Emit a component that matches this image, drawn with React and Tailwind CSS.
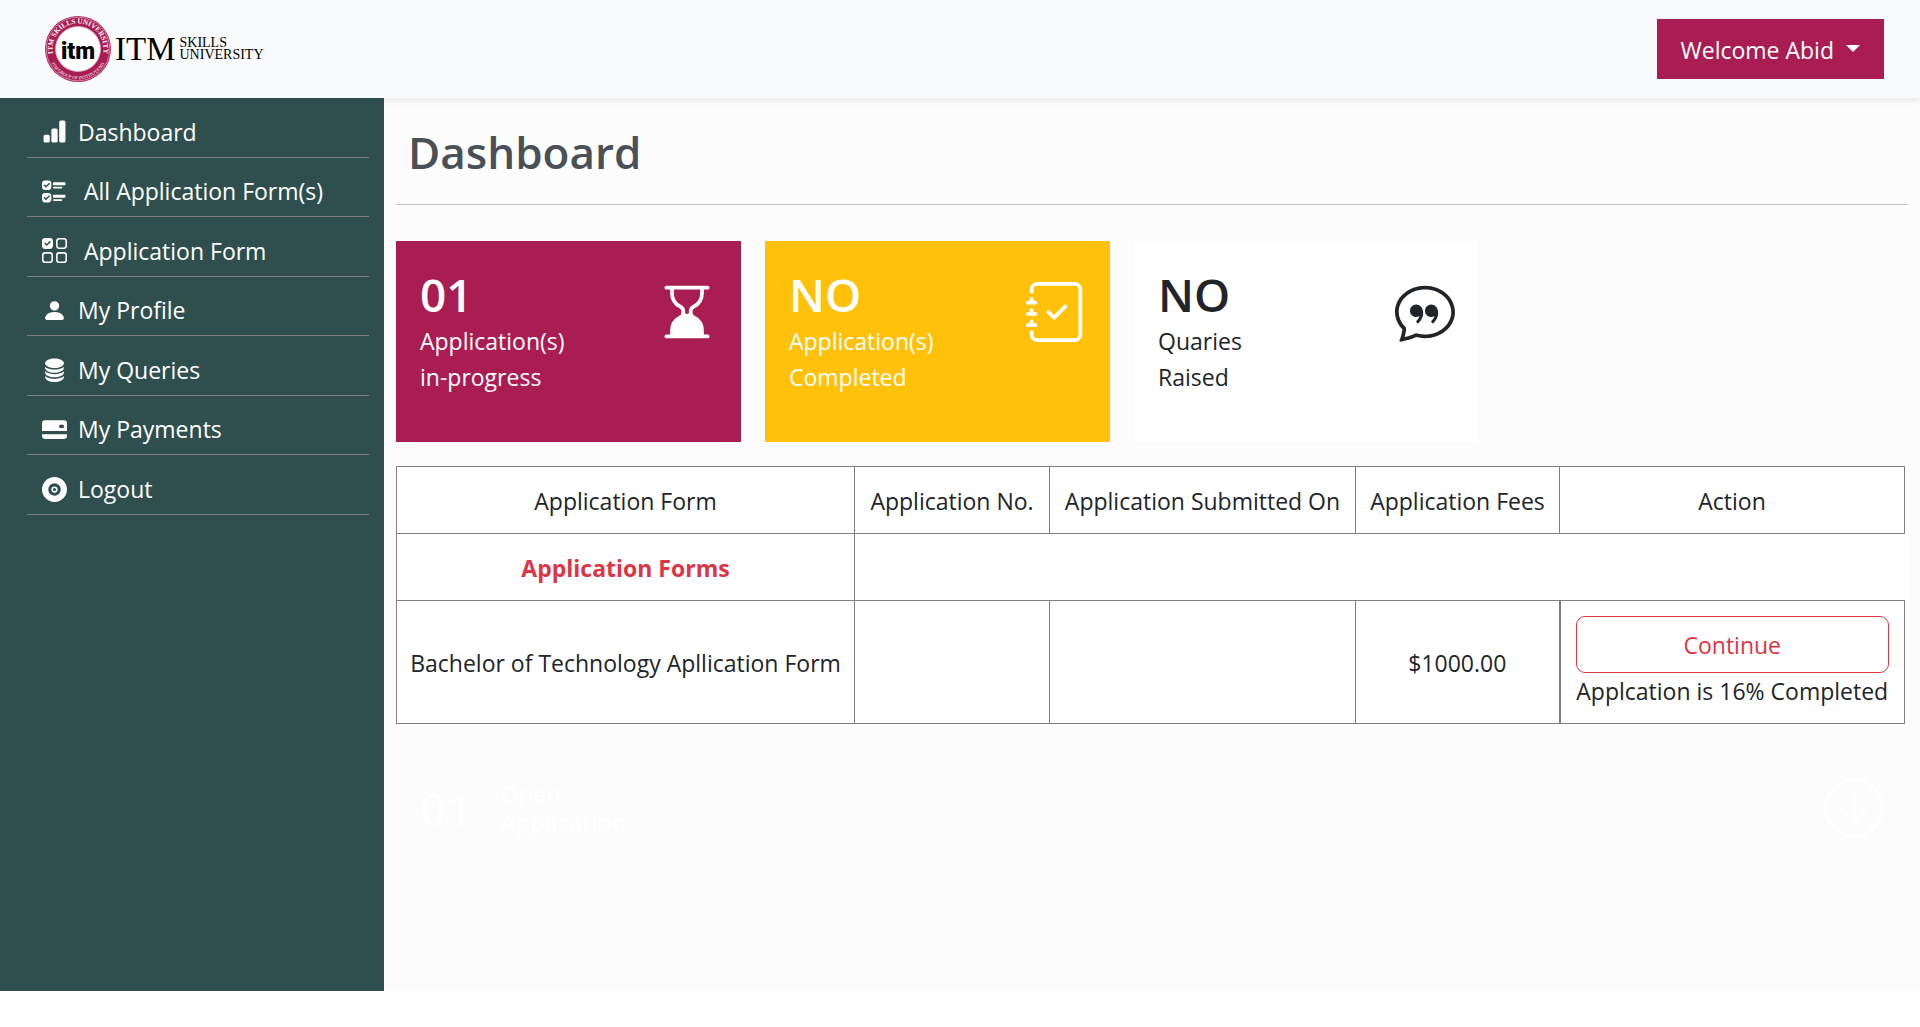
import {
  BsBarChartFill, BsUiChecks, BsUiChecksGrid, BsPersonFill, BsDatabaseFill,
  BsCreditCard2BackFill, BsVinylFill, BsHourglassBottom, BsJournalCheck,
  BsChatQuote, BsArrowDownCircle,
} from "react-icons/bs";

const navItems = [
  { label: "Dashboard", Icon: BsBarChartFill, gap: "gap-[11px]" },
  { label: "All Application Form(s)", Icon: BsUiChecks, gap: "gap-[17px]" },
  { label: "Application Form", Icon: BsUiChecksGrid, gap: "gap-[17px]" },
  { label: "My Profile", Icon: BsPersonFill, gap: "gap-[11px]" },
  { label: "My Queries", Icon: BsDatabaseFill, gap: "gap-[11px]" },
  { label: "My Payments", Icon: BsCreditCard2BackFill, gap: "gap-[11px]" },
  { label: "Logout", Icon: BsVinylFill, gap: "gap-[11px]" },
];

const cards = [
  { count: "01", lines: ["Application(s)", "in-progress"], Icon: BsHourglassBottom, tone: "bg-[#a91d52] text-white" },
  { count: "NO", lines: ["Application(s)", "Completed"], Icon: BsJournalCheck, tone: "bg-[#ffc10a] text-white" },
  { count: "NO", lines: ["Quaries", "Raised"], Icon: BsChatQuote, tone: "bg-white text-[#212529]" },
];

function Logo() {
  return (
    <a href="#home" aria-label="ITM Skills University" className="flex items-center gap-1 text-black">
      <svg viewBox="0 0 66 66" className="size-[66px]" aria-hidden="true">
        <defs>
          <path id="seal-top" d="M8.8 41 A25.5 25.5 0 1 1 57.2 41" />
          <path id="seal-bottom" d="M4 42 A30.4 30.4 0 0 0 62 42" />
        </defs>
        <circle cx="33" cy="33" r="33" fill="#a91d52" />
        <circle cx="33" cy="33" r="31.8" fill="none" stroke="#e3a9c0" strokeWidth="0.7" />
        <circle cx="33" cy="33" r="22.5" fill="#fff" stroke="#e3a9c0" strokeWidth="0.8" />
        <text fill="#fff" fontSize="7.2" fontWeight="700" fontFamily="Liberation Serif, serif">
          <textPath href="#seal-top" startOffset="50%" textAnchor="middle">ITM SKILLS UNIVERSITY</textPath>
        </text>
        <text fill="#fff" fontSize="4.6" fontFamily="Liberation Serif, serif">
          <textPath href="#seal-bottom" startOffset="50%" textAnchor="middle">ITM GROUP OF INSTITUTIONS</textPath>
        </text>
        <text x="33" y="43" textAnchor="middle" fontSize="23" fontWeight="900" fontFamily="Roboto, sans-serif">itm</text>
      </svg>
      <span className="font-['Liberation_Serif',serif] text-[33px] leading-none">ITM</span>
      <span className="flex flex-col font-['Liberation_Serif',serif] text-sm leading-3">
        <span>SKILLS</span>
        <span>UNIVERSITY</span>
      </span>
    </a>
  );
}

export default function App() {
  return (
    <div className="min-h-screen bg-white font-['Open_Sans','Noto_Sans',sans-serif] text-[23px] leading-9 text-[#212529]">
      <header className="relative z-10 flex h-[98px] items-center justify-between bg-[#f8fafc] pl-[45px] pr-9 shadow-[0_3px_6px_rgba(0,0,0,0.08)]">
        <Logo />
        <button type="button" className="flex items-center gap-3 bg-[#a91d52] px-6 pt-[13px] pb-[11px] text-white">
          Welcome Abid
          <svg viewBox="0 0 14 7" className="mb-1 h-[7px] w-3.5" fill="currentColor" aria-hidden="true">
            <path d="M0 0h14L7 7z" />
          </svg>
        </button>
      </header>

      <div className="flex min-h-[893px]">
        <nav className="w-1/5 shrink-0 bg-[#2f4f4f] pl-[27px] pr-[15px] text-white">
          <ul className="grid h-[417px] grid-rows-7">
            {navItems.map(({ label, Icon, gap }) => (
              <li key={label} className="flex flex-col justify-end border-b border-[#808080]">
                <a href="#nav" className={`flex items-center pb-[7px] pl-[15px] ${gap}`}>
                  <Icon className="size-[25px]" />
                  {label}
                </a>
              </li>
            ))}
          </ul>
        </nav>

        <main className="min-w-0 grow bg-[#fcfcfc] px-3">
          <h1 className="border-b border-[#c4c6c8] px-3 pt-6 pb-[22px] text-[44px] leading-[60px] font-semibold text-[#495057]">
            Dashboard
          </h1>

          <section className="grid grid-cols-4 gap-6 pt-9 pr-[60px]">
            {cards.map(({ count, lines, Icon, tone }) => (
              <article key={lines.join()} className={`flex justify-between px-6 pt-6 pb-[47px] ${tone}`}>
                <div>
                  <p className="text-[46px] leading-[58px] font-semibold">{count}</p>
                  {lines.map((line) => <p key={line}>{line}</p>)}
                </div>
                <Icon className="mt-[17px] size-[60px]" />
              </article>
            ))}
          </section>

          <div className="mt-6 mr-[-3px] bg-white pr-1.5">
            <table className="w-full border-collapse text-center whitespace-nowrap">
              <thead>
                <tr className="h-[67px] [&>th]:border [&>th]:border-[#808080] [&>th]:pt-0.5 [&>th]:font-normal">
                  <th scope="col" className="w-[458px]">Application Form</th>
                  <th scope="col" className="w-[195px]">Application No.</th>
                  <th scope="col" className="w-[306px]">Application Submitted On</th>
                  <th scope="col" className="w-[204px]">Application Fees</th>
                  <th scope="col">Action</th>
                </tr>
              </thead>
              <tbody>
                <tr className="h-[67px]">
                  <th scope="row" className="border border-[#808080] pt-0.5 font-bold text-[#dc3545]">Application Forms</th>
                  <td colSpan={4} />
                </tr>
                <tr className="[&>td]:border [&>td]:border-[#808080]">
                  <td className="pt-0.5">Bachelor of Technology Apllication Form</td>
                  <td />
                  <td />
                  <td className="pt-0.5">$1000.00</td>
                  <td className="border-l-2! px-[15px] pt-[15px] pb-3.5">
                    <button type="button" className="block w-full rounded-[9px] border border-[#dc3545] pt-2.5 pb-[9px] text-[#dc3545]">
                      Continue
                    </button>
                    <p>Applcation is 16% Completed</p>
                  </td>
                </tr>
              </tbody>
            </table>
          </div>

          <section className="flex items-center justify-between px-6 pt-[54px] text-white">
            <div className="flex items-center gap-7">
              <p className="text-[46px] leading-[58px] font-semibold">01</p>
              <p className="leading-7 font-semibold">Open<br />Application</p>
            </div>
            <BsArrowDownCircle className="size-[60px]" />
          </section>
        </main>
      </div>
    </div>
  );
}
